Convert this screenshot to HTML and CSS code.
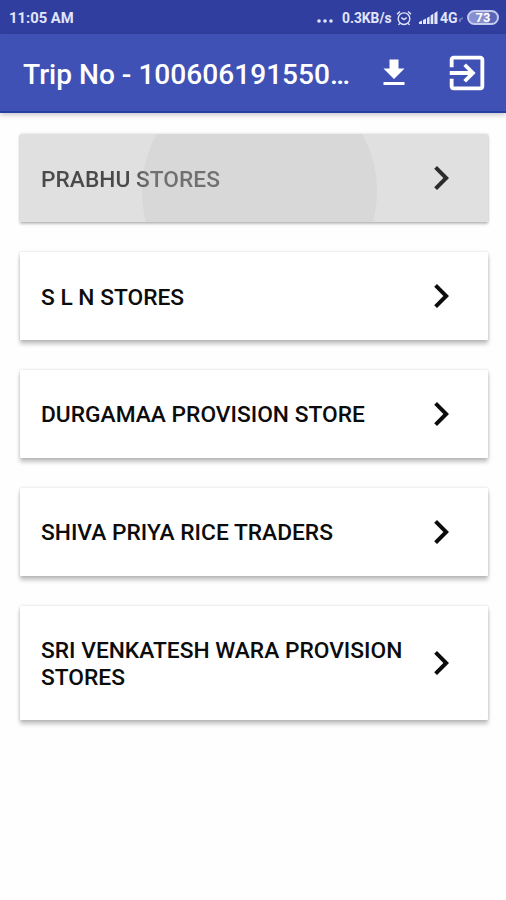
FILE: index.html
```html
<!DOCTYPE html>
<html lang="en">
<head>
<meta charset="utf-8">
<meta name="viewport" content="width=device-width, initial-scale=1">
<title>Trip stores</title>
<link rel="stylesheet" href="styles.css">
</head>
<body>
<div class="status">
  <span class="clock">11:05 AM</span>
  <div class="indicators">
    <svg class="more" viewBox="0 0 16 4"><circle cx="2" cy="2" r="1.8"/><circle cx="8" cy="2" r="1.8"/><circle cx="14" cy="2" r="1.8"/></svg>
    <span class="speed">0.3KB/s</span>
    <svg class="alarm" viewBox="0 0 16 16"><circle cx="8" cy="8.7" r="5.8"/><path d="M1 4.2 4 1.4M15 4.2 12 1.4M5.4 7.6 8 9.6l2.7-2M3.7 13.3l-1.2 1.6M12.3 13.3l1.2 1.6"/></svg>
    <svg class="signal" viewBox="0 0 19 13"><path d="M0 13v-2l3-1.500v3.500zM4 13V9l3-1.500V13zM8 13V7l2.600-1.500V13zM11.600 13V4.500l2.700-1.700V13zM15.400 13V2.200L18.500 0v13z"/></svg>
    <span class="network">4G</span>
    <svg class="faint" viewBox="0 0 4 5"><path d="M0 5V2l4-2v2L2 3v2z"/></svg>
    <span class="battery">73</span>
  </div>
</div>
<header class="toolbar">
  <h1 class="title">Trip No - 100606191550…</h1>
  <svg class="download" viewBox="0 0 24 24"><path d="M19 9h-4V3H9v6H5l7 7 7-7zM5 18v2h14v-2H5z"/></svg>
  <svg class="exit" viewBox="0 0 24 24"><path d="M10.090 15.590 11.500 17l5-5-5-5-1.410 1.410L12.670 11H3v2h9.670l-2.580 2.590zM19 3H5c-1.110 0-2 .9-2 2v4h2V5h14v14H5v-4H3v4c0 1.100.89 2 2 2h14c1.100 0 2-.9 2-2V5c0-1.100-.9-2-2-2z"/></svg>
</header>
<main class="stores">
  <div class="card pressed"><span class="name">PRABHU STORES</span><svg class="chevron" viewBox="0 0 24 24"><path d="M10 6 8.590 7.410 13.170 12l-4.580 4.590L10 18l6-6z"/></svg></div>
  <div class="card"><span class="name">S L N STORES</span><svg class="chevron" viewBox="0 0 24 24"><path d="M10 6 8.590 7.410 13.170 12l-4.580 4.590L10 18l6-6z"/></svg></div>
  <div class="card"><span class="name">DURGAMAA PROVISION STORE</span><svg class="chevron" viewBox="0 0 24 24"><path d="M10 6 8.590 7.410 13.170 12l-4.580 4.590L10 18l6-6z"/></svg></div>
  <div class="card"><span class="name">SHIVA PRIYA RICE TRADERS</span><svg class="chevron" viewBox="0 0 24 24"><path d="M10 6 8.590 7.410 13.170 12l-4.580 4.590L10 18l6-6z"/></svg></div>
  <div class="card"><span class="name">SRI VENKATESH WARA PROVISION STORES</span><svg class="chevron" viewBox="0 0 24 24"><path d="M10 6 8.590 7.410 13.170 12l-4.580 4.590L10 18l6-6z"/></svg></div>
</main>
</body>
</html>
```
FILE: styles.css
```css
* { box-sizing: border-box; }
body {
  margin: 0;
  min-height: 900px;
  background: #fefefe;
  font-family: Roboto, "Liberation Sans", sans-serif;
}
svg { display: block; flex: none; fill: currentColor; }

.status {
  display: flex;
  justify-content: space-between;
  align-items: center;
  height: 34px;
  padding: 1px 7px 0 9px;
  background: #303f9f;
  color: #e2e5fb;
  font-weight: 700;
}
.clock { font-size: 14.8px; }
.indicators { display: flex; align-items: center; }
.more { width: 16px; height: 4px; margin: 7px 9px 0 0; }
.speed { width: 51px; font-size: 13.8px; font-weight: 700; white-space: nowrap; }
.alarm {
  width: 16px;
  height: 16px;
  margin: 0 7px 0 3px;
  fill: none;
  stroke: currentColor;
  stroke-width: 1.4;
}
.signal { width: 19px; height: 13px; }
.network { width: 18px; margin-left: 2px; font-size: 14px; }
.faint { width: 4px; height: 5px; margin: 4px 4px 0 1px; opacity: .35; }
.battery {
  width: 32px;
  height: 15px;
  border: 2px solid #c5cbef;
  border-radius: 8px;
  background: linear-gradient(90deg, #8690d0 72%, #5866b8 72%);
  color: #fff;
  font-size: 13px;
  line-height: 12px;
  text-align: center;
}

.toolbar {
  position: relative;
  display: flex;
  align-items: center;
  height: 79px;
  padding: 1px 17px 0 23px;
  border-bottom: 2px solid #2440a4;
  background: #3f51b5;
  color: #fff;
  box-shadow: 0 2px 5px rgba(0, 0, 0, .22);
}
.title {
  flex: 1;
  margin: 0;
  padding-top: 3px;
  font-size: 28.1px;
  font-weight: 500;
  white-space: nowrap;
}
.download { width: 36px; height: 36px; margin-right: 32px; }
.exit { width: 46px; height: 46px; margin-right: -1px; }

.stores {
  display: flex;
  flex-direction: column;
  gap: 29.800px;
  padding: 21.400px 18.500px 0 20px;
}
.card {
  display: flex;
  align-items: center;
  justify-content: space-between;
  min-height: 88px;
  padding: 30px 22.500px 30px 21px;
  border-radius: 1px;
  background: #fff;
  color: #0c0c0c;
  box-shadow: 0 4px 4px rgba(0, 0, 0, .24), 0 0 3px rgba(0, 0, 0, .16);
}
.card.pressed {
  background: radial-gradient(circle at 239.500px 57px, #d8d8d8 117px, #e0e0e0 118px);
  box-shadow: 0 2px 3px rgba(0, 0, 0, .24), 0 0 3px rgba(0, 0, 0, .16);
}
.pressed .name {
  background: linear-gradient(90deg, #4a4a4a 50%, #707070 60%);
  background-clip: text;
  color: transparent;
}
.pressed .chevron { color: #2c2c2c; }
.name {
  margin: 1px -6px -1px 0;
  font-size: 22.750px;
  font-weight: 500;
  line-height: 27px;
}
.chevron { width: 48px; height: 48px; margin: -12px 0; }
```
